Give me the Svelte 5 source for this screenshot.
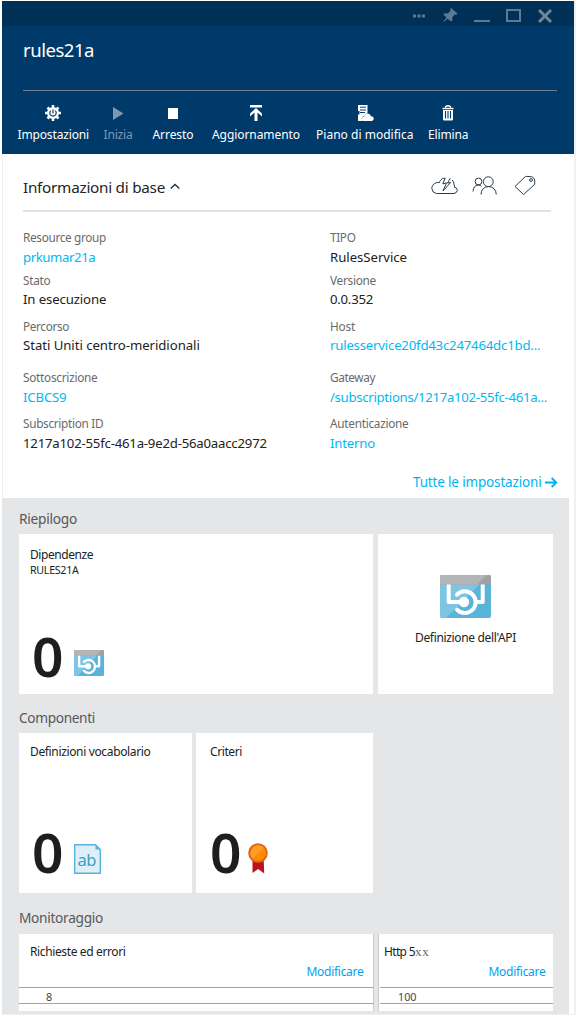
<script>
  const commands = [
    { name: 'Impostazioni', width: 71.5, icon: 'gear', left: 0 },
    { name: 'Inizia', width: 29, icon: 'play', left: 14.5, disabled: true },
    { name: 'Arresto', width: 41, icon: 'stop', left: 20 },
    { name: 'Aggiornamento', width: 88, icon: 'upload', left: 18.5 },
    { name: 'Piano di modifica', width: 97.5, icon: 'plan', left: 16 },
    { name: 'Elimina', width: 40.5, icon: 'trash', left: 14.5 },
  ];

  const fields = [
    ['Resource group', 83, 'prkumar21a', 72.3, true],
    ['TIPO', 25.5, 'RulesService', 77, false],
    ['Stato', 27.5, 'In esecuzione', 83.3, false],
    ['Versione', 46, '0.0.352', 43, false],
    ['Percorso', 46, 'Stati Uniti centro-meridionali', 176.8, false],
    ['Host', 25.2, 'rulesservice20fd43c247464dc1bd...', 210.3, true],
    ['Sottoscrizione', 74.5, 'ICBCS9', 43.5, true],
    ['Gateway', 45, '/subscriptions/1217a102-55fc-461a...', 217, true],
    ['Subscription ID', 80.3, '1217a102-55fc-461a-9e2d-56a0aacc2972', 243.8, false],
    ['Autenticazione', 78.5, 'Interno', 45, true],
  ];

  // Tracks a label out or in so that it takes its designed width.
  function track(node, width) {
    const natural = node.getBoundingClientRect().width;
    node.style.letterSpacing = `${(width - natural) / node.textContent.length}px`;
  }
</script>

{#snippet label(text, width)}<span class="label" use:track={width}>{text}</span>{/snippet}

{#snippet apiIcon(w, h)}
  <svg width={w} height={h} viewBox="0 0 51 43" preserveAspectRatio="none">
    <path d="M2 0H49Q51 0 51 2V41Q51 43 49 43H2Q0 43 0 41V2Q0 0 2 0Z" fill="#59b4d9" />
    <path d="M2 0H49L6 43H2Q0 43 0 41V2Q0 0 2 0Z" fill="#7dc5e2" />
    <path d="M0 9.5V2Q0 0 2 0H49Q51 0 51 2V9.5Z" fill="#a0a1a2" />
    <path d="M0 9.5V2Q0 0 2 0H47L37 9.5Z" fill="#b3b4b5" />
    <path d="M8.7 9.5V27H23" fill="none" stroke="#fff" stroke-width="4" stroke-linejoin="round" />
    <path d="M42.7 9.5V27H35" fill="none" stroke="#fff" stroke-width="4" stroke-linejoin="round" />
    <path d="M17 19.7A10.8 10.8 0 1 1 17 34.6" fill="none" stroke="#fff" stroke-width="4" stroke-linecap="round" />
    <circle cx="24" cy="27" r="5.2" fill="#fff" />
  </svg>
{/snippet}

<div class="blade">
  <header>
    <div class="controls">
      <svg width="574" height="25" viewBox="0 0 574 25" fill="#5c7a94">
        <path d="M411 13.5h3v3h-3zM415.5 13.5h3v3h-3zM420 13.5h3v3h-3z" />
        <path d="M449 7l6.5 5.5-1.5 1.2-1.2-.3-2.6 3 .2 3-1.4 1.1-3.2-2.8-5.3 3.8 4-5-3-2.9 1.2-1.3 3.3.2 2.6-3-.4-1.4z" />
        <path d="M472 19h16v2h-16z" />
        <path d="M505 9h13v11h-13z" fill="none" stroke="#5c7a94" stroke-width="2" />
        <path d="M537 9l12 12M549 9l-12 12" stroke="#6c8699" stroke-width="3" />
      </svg>
    </div>
    <h1>{@render label('rules21a', 71)}</h1>
    <nav>
      {#each commands as c}
        <div class="command" class:disabled={c.disabled} style:margin-left="{c.left}px" style:width="{c.width}px">
          <svg width="18" height="18" viewBox="0 0 18 18" fill="currentColor">
            {#if c.icon === 'gear'}
              <path d="M9 1v16M1 9h16M3.500 3.500l11 11M14.500 3.500l-11 11" stroke="currentColor" stroke-width="2.600" />
              <circle cx="9" cy="9" r="6" />
              <path d="M6.800 6.600a3.200 3.200 0 1 0 4.400 0M9 5.500V9.500" fill="none" stroke="#003a6b" stroke-width="1.200" />
            {:else if c.icon === 'play'}
              <path d="M4 3l10.500 6.500L4 16z" />
            {:else if c.icon === 'stop'}
              <path d="M4 4h10v11H4z" />
            {:else if c.icon === 'upload'}
              <path d="M3 1h12v2.500H3zM9 4l6 5.500v3l-4.500-4V17h-3V8.500L3 12.500v-3z" />
            {:else if c.icon === 'plan'}
              <path d="M2 1h9.500v8.200q-2 .3-3.200 2.700-2.300.5-2.600 2.500.1 1.600 1.300 2.600H2V10.500h1.500V7H2z" />
              <path d="M4 3.200h6M4 6h6M4 8.500h5" stroke="#003a6b" stroke-width="1" />
              <path d="M7 17q-1.300-.7-1.300-2.200.2-2 2.600-2.200.7-2.900 3.500-3 2.500 0 3.200 2.700 2.600 0 2.800 2.300-.1 1.900-1.800 2.400z" />
            {:else}
              <path d="M6.500 3.500V2.500q2.500-1.500 5 0v1M3.500 4.500h11" fill="none" stroke="currentColor" stroke-width="1.300" />
              <path d="M4 6h10v9.500q0 1-1 1H5q-1 0-1-1z" />
              <path d="M6.500 7v7.500M9 7v7.500M11.500 7v7.500" stroke="#003a6b" stroke-width="1.100" />
            {/if}
          </svg>
          {@render label(c.name, c.width)}
        </div>
      {/each}
    </nav>
  </header>

  <section class="essentials">
    <div class="heading">
      <h2>{@render label('Informazioni di base', 142)}</h2>
      <svg class="chevron" width="10" height="7" viewBox="0 0 10 7"><path d="M.7 5.500L5 1.500l4.300 4" fill="none" stroke="#222c3c" stroke-width="1.300" /></svg>
      <svg class="tools" width="105" height="22" viewBox="0 0 105 22" fill="none" stroke="#2c3a4a" stroke-width="1" stroke-linejoin="round">
        <path d="M13.800 3.200Q11 3 9.500 5.300 8.500 6.500 8.300 7.700 7 7 5 7.800 .8 9.500.8 13.500 1.300 18 5.500 18.500H23q3-.5 3.300-3.200 0-2.800-3-3.200.6-1-.2-2.200Q23 6.500 21 5" />
        <path d="M14.300 2.800l-2.500 6 3.700-.9-3.500 8 7.700-8.400-3.200.6 2.800-4.800" />
        <circle cx="47.500" cy="6.500" r="3.400" /><circle cx="57.300" cy="6.700" r="4.900" />
        <path d="M42 16.500q.3-6 5.300-6.500 2.300 0 3.300 1.500M50 19.500q.4-7.500 7.500-8 7.300.5 7.800 8" />
        <path d="M84 11.500L94 1.900q.5-.5 1.300-.5l5.500.3q2.600 1.500 2.900 3.300v4.300L92.600 19.500z" /><circle cx="100" cy="5" r="1.400" />
      </svg>
    </div>
    <div class="fields">
      {#each fields as [name, nameWidth, value, valueWidth, link]}
        <div class="field">
          <div class="name">{@render label(name, nameWidth)}</div>
          <div class="value" class:link>{@render label(value, valueWidth)}</div>
        </div>
      {/each}
    </div>
    <div class="all">
      {@render label('Tutte le impostazioni', 128.500)}
      <svg width="13" height="11" viewBox="0 0 13 11"><path d="M0 5.500h11M6.700 1l4.500 4.500L6.700 10" fill="none" stroke="#00b4f0" stroke-width="2" /></svg>
    </div>
  </section>

  <main>
    <h3>{@render label('Riepilogo', 58)}</h3>
    <div class="tiles">
      <div class="tile wide">
        <div class="title">{@render label('Dipendenze', 63)}</div>
        <div class="sub">{@render label('RULES21A', 48.500)}</div>
        <div class="count"><b>0</b>{@render apiIcon(30, 26)}</div>
      </div>
      <div class="tile api">
        {@render apiIcon(51, 43)}
        <div class="title">{@render label("Definizione dell'API", 101)}</div>
      </div>
    </div>
    <h3 class="second">{@render label('Componenti', 76)}</h3>
    <div class="tiles narrow">
      <div class="tile">
        <div class="title">{@render label('Definizioni vocabolario', 120.500)}</div>
        <div class="count">
          <b>0</b>
          <span class="vocab">
            <svg width="27" height="30" viewBox="0 0 27 30"><path d="M.7.700H21.500L26.300 5.500V29.300H.7z" fill="#deeff7" stroke="#59b4d9" stroke-width="1.400" /><path d="M21.500.5V5.500H26.500z" fill="#59b4d9" /></svg>
            <span class="ab">ab</span>
          </span>
        </div>
      </div>
      <div class="tile policy">
        <div class="title">{@render label('Criteri', 32)}</div>
        <div class="count ribbon">
          <b>0</b>
          <svg width="20" height="31" viewBox="0 0 20 31">
            <path d="M4.500 17h11.200l.5 13.500-6-4.500-5.700 4z" fill="#ba141a" />
            <circle cx="10" cy="10" r="9.800" fill="#e0661c" />
            <circle cx="10" cy="10" r="7.800" fill="#ff8c00" />
            <path d="M4.500 15.500A7.800 7.800 0 0 1 15.500 4.500z" fill="#ff9d28" />
          </svg>
        </div>
      </div>
    </div>
    <h3 class="third">{@render label('Monitoraggio', 84)}</h3>
    <div class="tiles charts">
      <div class="tile">
        <div class="title">{@render label('Richieste ed errori', 95.500)}</div>
        <div class="edit">{@render label('Modificare', 57)}</div>
        <div class="axis">8</div>
      </div>
      <div class="tile http">
        <div class="title">{@render label('Http 5', 31)}<span class="xx">xx</span></div>
        <div class="edit">{@render label('Modificare', 57)}</div>
        <div class="axis">100</div>
      </div>
    </div>
  </main>
</div>

<style>
  :global(body) { background: #fff; }
  * { box-sizing: border-box; }
  h1, h2, h3 { margin: 0; font-weight: 400; }
  svg { display: block; flex: none; }
  .label { display: inline-block; white-space: nowrap; }
  .blade {
    width: 574px; height: 1014px; margin: 1px 0 0 2px; overflow: hidden;
    font-family: "Noto Sans", "Open Sans", sans-serif; color: #222;
    border-right: 2px solid #f0f0f0; border-bottom: 1px solid #eee;
  }
  header { width: 574px; height: 153px; background: #003a6b; color: #fff; }
  .controls { height: 25px; background: #003055; }
  h1 { height: 65px; margin: 0 19px 0 21px; padding-top: 11px; border-bottom: 1px solid #717b92; font-size: 18.500px; line-height: 26px; }
  nav { display: flex; padding: 13px 0 0 15.500px; }
  .command { display: flex; flex-direction: column; align-items: center; font-size: 12px; line-height: 18px; flex: none; }
  .command .label { margin-top: 4px; }
  .disabled { color: #7c98b2; }
  .essentials { height: 344px; border-left: 1px solid #eee; padding-left: 20px; }
  .heading { display: flex; align-items: center; width: 528px; height: 58px; padding-top: 9px; border-bottom: 2px solid #e1e1e1; }
  h2 { font-size: 15.300px; line-height: 22px; color: #252525; }
  .chevron { margin-left: 5px; }
  .tools { margin: -2px 15.500px 0 auto; }
  .fields { display: grid; grid-template-columns: 307px 230px; grid-template-rows: 43px 46px 51px 46px 42px; margin-top: 16px; }
  .name { height: 18px; font-size: 11.800px; line-height: 18px; color: #6a6a6a; }
  .value { margin-top: 2px; height: 18px; font-size: 13.200px; line-height: 18px; }
  .field:nth-child(n+3):nth-child(-n+6) .value { margin-top: 1px; }
  .link { color: #00b9f0; }
  .all { display: flex; align-items: center; justify-content: flex-end; gap: 3px; width: 534.500px; margin-top: 15px; font-size: 13.500px; line-height: 22px; color: #00b4f0; }
  main { width: 567px; height: 517px; padding: 10px 0 0 17px; background: #e5e6e8; }
  h3 { height: 26px; font-size: 13.700px; line-height: 22px; color: #58585a; }
  .second { margin-top: 13px; }
  .third { margin-top: 14px; height: 27px; }
  .tiles { display: grid; grid-template-columns: 354px 175px; gap: 5px; height: 160px; }
  .narrow { grid-template-columns: 173px 177px; gap: 4px; }
  .tile { display: flex; flex-direction: column; background: #fff; padding: 12px 0 0 11px; }
  .title { font-size: 12px; line-height: 17px; height: 17px; }
  .sub { font-size: 10.700px; line-height: 14px; }
  .narrow .title { margin-top: -2px; }
  .count { display: flex; align-items: flex-end; gap: 12px; height: 40px; margin: auto 0 16px 2px; padding-bottom: 3px; }
  .wide .count { margin-bottom: 15px; }
  .count b { width: 29.500px; font-size: 55px; font-weight: 600; line-height: 40px; height: 40px; margin-bottom: 2px; color: #1e1e1e; }
  .wide .count b { margin-bottom: 0; }
  .policy { padding-left: 14px; }
  .ribbon { gap: 8px; margin-left: 0; }
  .vocab { position: relative; }
  .ab { position: absolute; left: 4px; top: 5px; font-size: 16.500px; line-height: 22px; letter-spacing: -.5px; color: #3e9fca; }
  .api { align-items: center; padding: 41px 0 0; }
  .api .title { margin-top: 11px; }
  .charts { height: 77px; }
  .charts .tile { padding-top: 9px; box-shadow: 1px 0 #c8c9cb; }
  .charts .http { border-left: 1px solid #c8c9cb; box-shadow: none; padding-left: 5px; }
  .edit { align-self: flex-end; margin: 3px 9.500px 0 0; font-size: 12px; line-height: 18px; color: #00a2ed; }
  .http .edit { margin-right: 7.500px; }
  .axis { margin: 6px 0 0 -11px; padding-left: 27px; height: 17px; border: solid #a3a3a3; border-width: 1px 0; font-size: 10.800px; line-height: 17px; color: #444; }
  .http .axis { margin-left: -4px; padding-left: 18px; }
  .xx { font-family: "Liberation Serif", serif; font-size: 13px; color: #666; letter-spacing: .8px; }
</style>
